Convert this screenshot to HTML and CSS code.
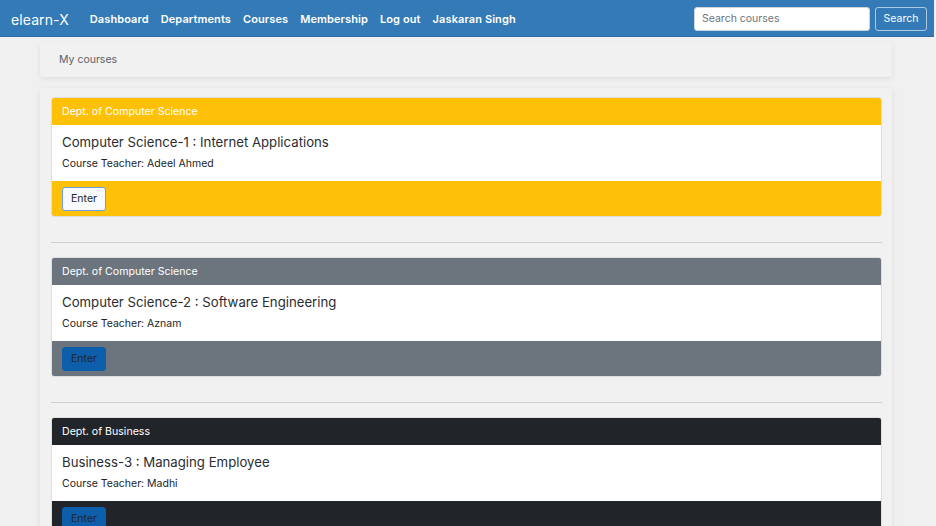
FILE: index.html
```html
<!DOCTYPE html>
<html>
<head>
<meta charset="utf-8">
<link rel="stylesheet" href="styles.css">
</head>
<body>
<nav class="navbar">
  <a class="brand">elearn-X</a>
  <ul class="nav-links">
    <li>Dashboard</li>
    <li>Departments</li>
    <li>Courses</li>
    <li>Membership</li>
    <li>Log out</li>
    <li>Jaskaran Singh</li>
  </ul>
  <form class="search">
    <input class="search-input" type="text" placeholder="Search courses">
    <button class="search-btn" type="button">Search</button>
  </form>
</nav>
<main class="container">
  <div class="breadcrumb">My courses</div>
  <section class="panel">
    <div class="course card-warning">
      <div class="course-head">Dept. of Computer Science</div>
      <div class="course-body">
        <h5 class="course-title">Computer Science-1 : Internet Applications</h5>
        <p class="course-teacher">Course Teacher: Adeel Ahmed</p>
      </div>
      <div class="course-foot"><button class="btn btn-light">Enter</button></div>
    </div>
    <hr class="sep">
    <div class="course card-secondary">
      <div class="course-head">Dept. of Computer Science</div>
      <div class="course-body">
        <h5 class="course-title">Computer Science-2 : Software Engineering</h5>
        <p class="course-teacher">Course Teacher: Aznam</p>
      </div>
      <div class="course-foot"><button class="btn btn-primary">Enter</button></div>
    </div>
    <hr class="sep">
    <div class="course card-dark">
      <div class="course-head">Dept. of Business</div>
      <div class="course-body">
        <h5 class="course-title">Business-3 : Managing Employee</h5>
        <p class="course-teacher">Course Teacher: Madhi</p>
      </div>
      <div class="course-foot"><button class="btn btn-primary">Enter</button></div>
    </div>
  </section>
</main>
</body>
</html>
```
FILE: styles.css
```css
* { box-sizing: border-box; }
html, body { height: 100%; }
body {
  margin: 0;
  background: #f0f0f0;
  font-family: Inter, "Noto Sans", "Liberation Sans", sans-serif;
  color: #212529;
  overflow: hidden;
}
.navbar {
  height: 37px;
  background: #337ab7;
  border-bottom: 1px solid #2e6da4;
  display: flex;
  align-items: center;
  padding: 2px 7px 0 11px;
  margin-right: 2px;
}
.brand {
  color: #fff;
  font-size: 14px;
  letter-spacing: 0.1px;
  margin-right: 21px;
}
.nav-links {
  list-style: none;
  margin: 0;
  padding: 0;
  display: flex;
  gap: 12px;
  flex: 1;
}
.nav-links li {
  color: #fff;
  font-size: 11px;
  font-weight: 600;
  letter-spacing: 0.1px;
}
.search { display: flex; gap: 5px; margin-top: -1px; }
.search-input {
  width: 176px;
  height: 24px;
  border: 1px solid #ced4da;
  border-radius: 3px;
  padding: 0 7px;
  font-family: inherit;
  font-size: 10.5px;
  outline: none;
}
.search-input::placeholder { color: #6c757d; }
.search-btn {
  width: 52px;
  height: 24px;
  background: transparent;
  border: 1px solid rgba(255,255,255,0.6);
  border-radius: 3px;
  color: #fff;
  font-family: inherit;
  font-size: 10.5px;
  padding: 0;
}
.container {
  width: 852px;
  margin: 6px 0 0 40px;
}
.breadcrumb {
  height: 34px;
  background: #f1f1f1;
  border-radius: 3px;
  box-shadow: 0 2px 5px rgba(0,0,0,0.07);
  padding: 0 19px 1px;
  display: flex;
  align-items: center;
  font-size: 10.5px;
  color: #5a6169;
  margin-bottom: 11px;
}
.panel {
  background: #f1f1f1;
  border-radius: 3px;
  box-shadow: 0 2px 6px rgba(0,0,0,0.08);
  padding: 9px 10px 30px 11px;
}
.course {
  border-radius: 3px;
  overflow: hidden;
  border: 1px solid rgba(0,0,0,0.08);
}
.course-head {
  height: 27px;
  padding: 0 10px;
  display: flex;
  align-items: center;
  font-size: 10.6px;
  color: #fff;
}
.course-body {
  background: #fff;
  height: 56px;
  padding: 9px 10px 0;
}
.course-title {
  margin: 0 0 6px;
  font-size: 13.2px;
  font-weight: 400;
  line-height: 17px;
  color: #2a2d31;
}
.course-teacher {
  margin: 0;
  font-size: 10.5px;
  line-height: 14px;
}
.course-foot {
  height: 35px;
  padding: 5px 10px;
}
.card-warning .course-head, .card-warning .course-foot { background: #ffc107; }
.card-secondary .course-head, .card-secondary .course-foot { background: #6c757d; }
.card-dark .course-head, .card-dark .course-foot { background: #212529; }
.btn {
  height: 24px;
  width: 44px;
  border-radius: 3px;
  font-family: inherit;
  font-size: 10.5px;
  padding: 0;
}
.btn-light {
  background: #f8f9fa;
  border: 1px solid #6b9de0;
  color: #212529;
}
.btn-primary {
  background: #0d5eab;
  border: 1px solid #0d5eab;
  color: #212529;
}
.sep {
  border: 0;
  border-top: 1px solid #cfcfcf;
  margin: 25px 0 14px;
}
```
